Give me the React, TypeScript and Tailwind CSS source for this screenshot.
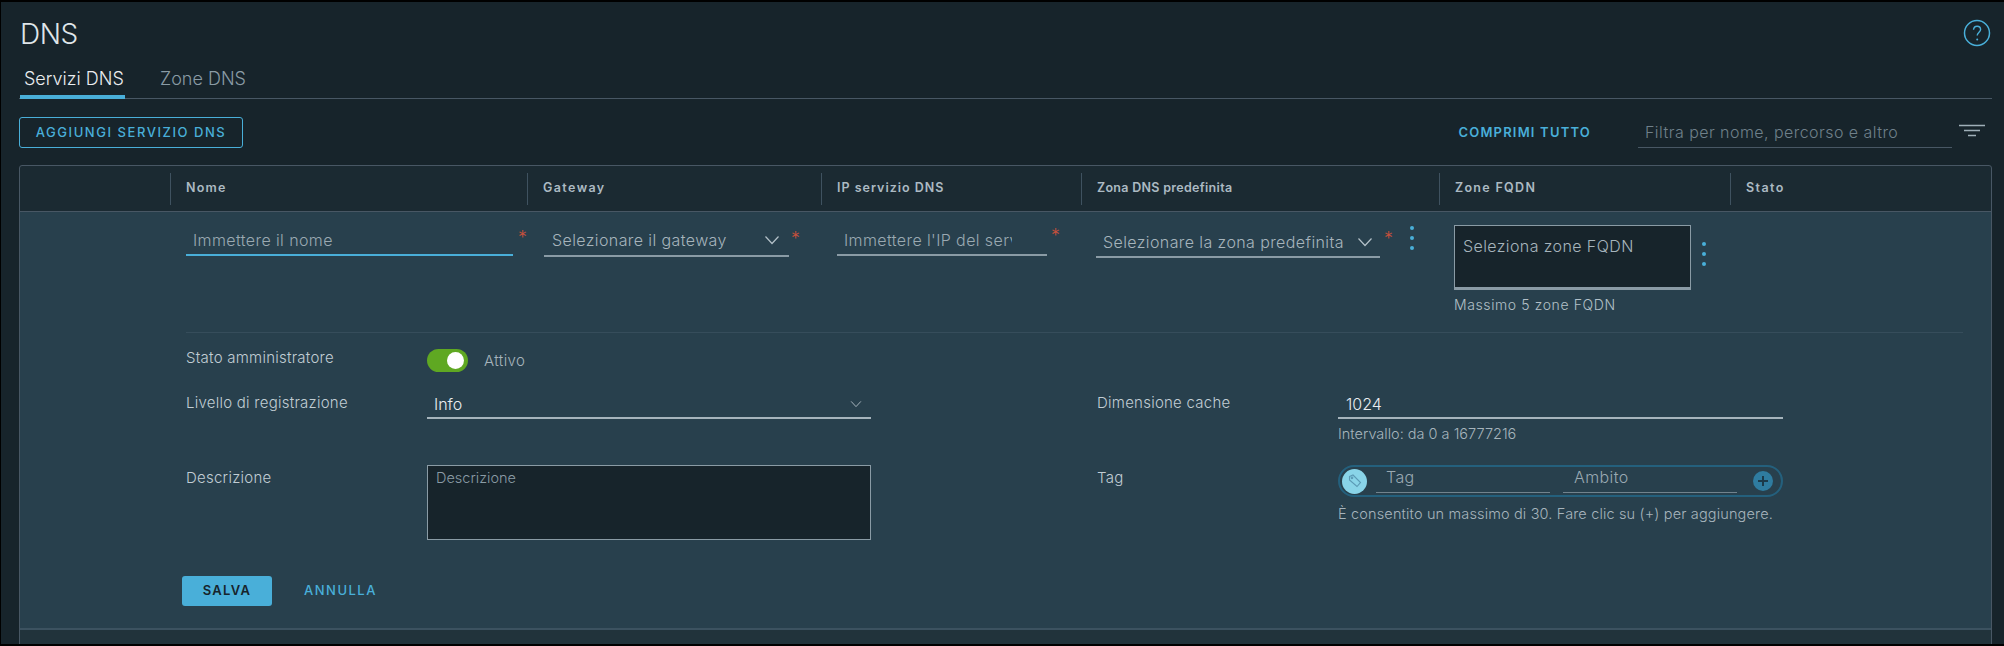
import React from "react";

const FONT = "font-['Inter','Noto_Sans',sans-serif]";

function Chevron({ className = "" }: { className?: string }) {
  return (
    <svg width="16" height="10" viewBox="0 0 16 10" fill="none" stroke="#b3c0c8" strokeWidth="1.2" className={className}>
      <path d="M1.5 1.5 L8 8.5 L14.5 1.5" />
    </svg>
  );
}

function Star({ className = "" }: { className?: string }) {
  return <span className={`block text-[18px] leading-[14px] text-[#c9503c] ${className}`}>*</span>;
}

function Dots({ className = "" }: { className?: string }) {
  return (
    <div className={`flex flex-col gap-[6.5px] ${className}`}>
      <span className="h-[3.5px] w-[3.5px] rounded-full bg-[#49afd9]" />
      <span className="h-[3.5px] w-[3.5px] rounded-full bg-[#49afd9]" />
      <span className="h-[3.5px] w-[3.5px] rounded-full bg-[#49afd9]" />
    </div>
  );
}

function HeaderCell({ label, className }: { label: string; className: string }) {
  return (
    <div className={`flex h-8 items-center border-l border-[#3f5260] pl-[15px] text-[12.5px] font-semibold text-[#acbac3] ${className}`}>
      {label}
    </div>
  );
}

function Label({ children, className = "" }: { children: React.ReactNode; className?: string }) {
  return <div className={`w-[241px] shrink-0 text-[15px] leading-5 tracking-[0.25px] font-light text-[#c1cdd4] ${className}`}>{children}</div>;
}

export default function App() {
  return (
    <div className={`${FONT} h-[646px] w-[2004px] overflow-hidden border-y-2 border-l border-black bg-[#17242b] pl-[18px] pr-3`}>
      <div className="flex h-[56px] items-start justify-between">
        <h1 className="ml-[1px] mt-[14px] text-[28px] font-light leading-[36px] tracking-[-0.5px] text-[#dfe5e9]">DNS</h1>
        <svg width="28" height="28" viewBox="0 0 28 28" fill="none" className="mt-[17px] mr-[1px]">
          <circle cx="14" cy="14" r="12.5" stroke="#49afd9" strokeWidth="1.5" />
          <path d="M10.5 10.8c.2-2.3 1.6-3.6 3.6-3.6s3.5 1.3 3.5 3.2c0 2.6-3.4 3-3.4 6.2" stroke="#49afd9" strokeWidth="1.4" />
          <circle cx="14.2" cy="20.4" r="1" fill="#49afd9" />
        </svg>
      </div>

      <div className="flex h-[41px] items-stretch gap-[35px] border-b border-[#485764] text-[18px] font-light">
        <div className="ml-[1px] w-[105px] border-b-[4px] border-[#49afd9] pl-[4px] pt-[9px] leading-6 -mb-px text-[#eaedf0] whitespace-nowrap">Servizi DNS</div>
        <div className="pt-[9px] leading-6 text-[#8a9ba5]">Zone DNS</div>
      </div>

      <div className="mt-[18px] flex h-[31px] items-center justify-between">
        <button className="h-[31px] w-[224px] rounded-[3px] border border-[#49afd9] text-[13px] font-medium tracking-[1.55px] text-[#49afd9]">
          AGGIUNGI SERVIZIO DNS
        </button>
        <div className="flex items-center">
          <span className="text-[13px] font-semibold tracking-[1.2px] text-[#49afd9]">COMPRIMI TUTTO</span>
          <input
            readOnly
            placeholder="Filtra per nome, percorso e altro"
            className="ml-[47px] h-[31px] w-[314px] border-b border-[#485764] bg-transparent pl-[7px] text-[16px] tracking-[0.45px] font-light outline-none placeholder:text-[#6f808a]"
          />
          <svg width="28" height="14" viewBox="0 0 28 14" fill="none" className="ml-[6px] mr-[6px] mt-[-4px]" stroke="#9fafb8" strokeWidth="1.6">
            <path d="M1 1.5h26M6 6.5h16M10 11.5h8" />
          </svg>
        </div>
      </div>

      <div className="mt-[17px] h-[480px] overflow-hidden rounded-t-[3px] border border-[#485764] bg-[#1b2a32]">
        <div className="flex h-[46px] items-center border-b border-[#485764] pl-[150px]">
          <HeaderCell label="Nome" className="w-[357px] tracking-[1.2px]" />
          <HeaderCell label="Gateway" className="w-[294px] tracking-[1.4px]" />
          <HeaderCell label="IP servizio DNS" className="w-[260px] tracking-[1px]" />
          <HeaderCell label="Zona DNS predefinita" className="w-[358px] tracking-[0.3px]" />
          <HeaderCell label="Zone FQDN" className="w-[291px] tracking-[1.3px]" />
          <HeaderCell label="Stato" className="w-[255px] tracking-[1.4px]" />
        </div>

        <div className="h-[418px] border-b-2 border-[#3c5260] bg-[#28404d]">
          <div className="flex h-[120px] items-start pl-[166px] text-[16px] font-light tracking-[0.4px]">
            <div className="mt-[14px] flex w-[358px] items-start">
              <input readOnly placeholder="Immettere il nome" className="h-[30px] w-[327px] border-b-2 border-[#49afd9] bg-transparent pl-[7px] tracking-[0.4px] outline-none placeholder:text-[#9aa9b2]" />
              <Star className="ml-[5px] mt-[5px]" />
            </div>
            <div className="mt-[14px] flex w-[293px] items-start">
              <div className="flex h-[31px] w-[245px] items-center justify-between border-b-2 border-[#8a9ba5] pb-[2px] pl-[8px] pr-[9px] text-[#a6b4bc]">
                <span className="whitespace-nowrap">Selezionare il gateway</span>
                <Chevron />
              </div>
              <Star className="ml-[2px] mt-[6px]" />
            </div>
            <div className="mt-[14px] flex w-[259px] items-start">
              <div className="h-[30px] w-[210px] border-b-2 border-[#8a9ba5] pl-[7px] pr-[35px]">
                <input readOnly placeholder="Immettere l'IP del servizio DNS" className="h-[27px] w-full bg-transparent tracking-[0.4px] outline-none placeholder:text-[#9aa9b2]" />
              </div>
              <Star className="ml-[4px] mt-[3px]" />
            </div>
            <div className="mt-[16px] flex w-[358px] items-start">
              <div className="flex h-[30px] w-[284px] items-center justify-between border-b-2 border-[#8a9ba5] pl-[7px] pr-[7px] text-[#a6b4bc]">
                <span className="whitespace-nowrap">Selezionare la zona predefinita</span>
                <Chevron />
              </div>
              <Star className="ml-[4px] mt-[4px]" />
              <Dots className="ml-[17px] mt-[-2px]" />
            </div>
            <div className="mt-[13px] w-[291px]">
              <div className="flex items-start">
                <div className="h-[65px] w-[237px] whitespace-nowrap border border-b-[3px] border-[#8a9ba5] bg-[#17242b] px-[8px] pt-[10px] leading-5 text-[#a6b4bc]">
                  Seleziona zone FQDN
                </div>
                <Dots className="ml-[11px] mt-[17px]" />
              </div>
              <div className="mt-[6px] whitespace-nowrap text-[14px] font-light tracking-[0.6px] leading-[18px] text-[#b3c0c8]">Massimo 5 zone FQDN</div>
            </div>
          </div>

          <div className="ml-[166px] mr-[28px] border-t border-[#364d5b]" />

          <div className="pl-[166px]">
            <div className="mt-[14px] flex h-[26px] items-start">
              <Label className="mt-[1px]">Stato amministratore</Label>
              <div className="mt-[1px] flex items-center">
                <div className="flex h-[23px] w-[41px] items-center justify-end rounded-full bg-[#5fa822] pr-[4px]">
                  <span className="h-[17px] w-[17px] rounded-full bg-white" />
                </div>
                <span className="ml-[16px] mt-[2px] text-[15px] tracking-[0.4px] font-light text-[#a6b4bc]">Attivo</span>
              </div>
            </div>

            <div className="mt-[17px] flex items-start">
              <Label className="mt-[3px]">Livello di registrazione</Label>
              <div className="flex h-[29px] w-[444px] items-center justify-between border-b-2 border-[#a6b4bc] pl-[7px] pr-[7px] text-[16px] font-light text-[#eaedf0]">
                <span>Info</span>
                <Chevron className="scale-75" />
              </div>
              <Label className="ml-[226px] mt-[3px] w-[240px]">Dimensione cache</Label>
              <div className="w-[445px]">
                <div className="flex h-[29px] items-center border-b-2 border-[#a6b4bc] pl-[8px] text-[16px] font-light text-[#eaedf0]">1024</div>
                <div className="mt-[6px] text-[14.5px] leading-[18px] font-light text-[#a6b4bc]">Intervallo: da 0 a 16777216</div>
              </div>
            </div>

            <div className="mt-[22px] flex items-start">
              <Label className="mt-[3px]">Descrizione</Label>
              <div className="h-[75px] w-[444px] border border-[#8a9ba5] bg-[#17242b] pl-[8px] pt-[2px] text-[14.5px] font-light leading-5 text-[#8a9ba5]">Descrizione</div>
              <Label className="ml-[226px] mt-[3px] w-[240px]">Tag</Label>
              <div className="w-[445px]">
                <div className="flex h-[32px] items-center rounded-full border-2 border-[#24607d] pl-[2px] pr-[8px]">
                  <div className="flex h-[25px] w-[25px] shrink-0 items-center justify-center rounded-full bg-[#89d4e8]">
                    <svg width="16" height="16" viewBox="0 0 16 16" fill="none" stroke="#5b9ab5" strokeWidth="1.1">
                      <path d="M2.5 3.5 6 2l7.5 7.5-3.5 4L2.5 7z" />
                      <circle cx="5" cy="4.8" r="0.8" />
                    </svg>
                  </div>
                  <input readOnly placeholder="Tag" className="ml-[9px] mt-[-3px] h-[26px] w-[174px] border-b border-[#71838e] bg-transparent pl-[10px] pb-[4px] text-[16px] tracking-[0.4px] font-light outline-none placeholder:text-[#9aa9b2]" />
                  <input readOnly placeholder="Ambito" className="ml-[13px] mt-[-3px] h-[26px] w-[174px] border-b border-[#71838e] bg-transparent pl-[11px] pb-[4px] text-[16px] tracking-[0.4px] font-light outline-none placeholder:text-[#9aa9b2]" />
                  <div className="ml-auto flex h-[20px] w-[20px] items-center justify-center rounded-full bg-[#2f7ca0]">
                    <svg width="12" height="12" viewBox="0 0 12 12" stroke="#1b3a4a" strokeWidth="2">
                      <path d="M6 1v10M1 6h10" />
                    </svg>
                  </div>
                </div>
                <div className="mt-[8px] whitespace-nowrap text-[14.5px] tracking-[0.15px] font-light leading-[18px] text-[#a6b4bc]">È consentito un massimo di 30. Fare clic su (+) per aggiungere.</div>
              </div>
            </div>

            <div className="-ml-[4px] mt-[36px] flex items-center">
              <button className="h-[30px] w-[90px] rounded-[3px] bg-[#49afd9] text-[13px] font-semibold tracking-[1.3px] text-[#17242b]">SALVA</button>
              <span className="ml-[32px] text-[13px] font-medium tracking-[1.5px] text-[#49afd9]">ANNULLA</span>
            </div>
          </div>
        </div>
        <div className="h-full bg-[#21333b]" />
      </div>
    </div>
  );
}
